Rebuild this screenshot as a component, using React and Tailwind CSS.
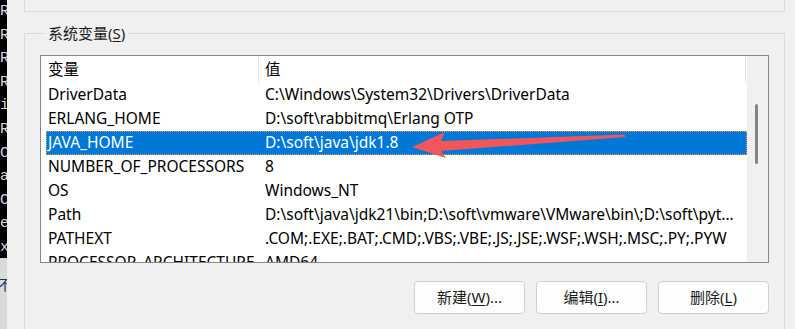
const rows = [
  ['DriverData', 'C:\\Windows\\System32\\Drivers\\DriverData'],
  ['ERLANG_HOME', 'D:\\soft\\rabbitmq\\Erlang OTP'],
  ['JAVA_HOME', 'D:\\soft\\java\\jdk1.8'],
  ['NUMBER_OF_PROCESSORS', '8'],
  ['OS', 'Windows_NT'],
  ['Path', 'D:\\soft\\java\\jdk21\\bin;D:\\soft\\vmware\\VMware\\bin\\;D:\\soft\\pyt...'],
  ['PATHEXT', '.COM;.EXE;.BAT;.CMD;.VBS;.VBE;.JS;.JSE;.WSF;.WSH;.MSC;.PY;.PYW'],
  ['PROCESSOR_ARCHITECTURE', 'AMD64'],
];

const termChars = ['R', 'R', 'R', 'R', 'i', 'R', 'C', 'a', 'C', 'e', 'x'];

const uiFont = "font-['Noto_Sans','Noto_Sans_CJK_SC',sans-serif]";

function Button({ label, hotkey, suffix = '' }) {
  return (
    <button className="w-[111px] h-[33px] bg-[#fdfdfd] border border-[#d0d0d0] rounded-[4px] text-[15px] text-[#1b1b1b] flex items-center justify-center">
      {label}(<span className="underline underline-offset-2">{hotkey}</span>){suffix}
    </button>
  );
}

export default function App() {
  return (
    <div className={`relative w-[795px] h-[329px] bg-[#f0f0f0] flex overflow-hidden ${uiFont}`}>
      {/* terminal window edge on the left */}
      <div className="w-[7px] shrink-0 flex flex-col">
        <div className="h-[258px] shrink-0 bg-black overflow-hidden">
          <div className="font-['Liberation_Mono',monospace] text-[15px] leading-[23.6px] text-[#d8d8d8] whitespace-nowrap">
            {termChars.map((c, i) => (
              <div key={i}>{c}</div>
            ))}
          </div>
        </div>
        <div className="flex-1 bg-[#dadada] overflow-hidden">
          <div className="mt-[16px] -ml-[2px] text-[14px] text-[#1d3557] font-['Noto_Sans_CJK_SC',sans-serif]">不</div>
        </div>
      </div>

      <div className="ml-[17px] w-[761px] flex flex-col">
        {/* bottom of the user variables group */}
        <div className="h-[12px] shrink-0 border-x border-b border-[#dcdcdc]" />

        <fieldset className="mt-[11px] shrink-0 border border-[#dcdcdc] px-[15px] pb-[20px] min-w-0">
          <legend className="ml-[5px] px-[3px] text-[15px] leading-[20px] text-[#1b1b1b]">
            系统变量(<span className="underline underline-offset-2">S</span>)
          </legend>

          <div className="mt-[12px] h-[208px] border border-[#828790] bg-white flex">
            <div className="w-[706px] overflow-hidden text-[15.5px] text-black">
              <div className="h-[27px] flex items-stretch">
                <div className="ml-[5px] w-[212px] pl-[2px] flex items-center">变量</div>
                <div className="flex-1 mr-[1px] border-x border-[#e5e5e5] pl-[6px] flex items-center">值</div>
              </div>
              {rows.map(([name, value]) => {
                const selected = name === 'JAVA_HOME';
                return (
                  <div
                    key={name}
                    className={`ml-[5px] h-[24px] flex items-center whitespace-nowrap ${
                      selected ? 'bg-[#0078d7] text-white border border-dotted border-[#f0a040]' : 'border border-transparent'
                    }`}
                  >
                    <div className="w-[212px] pl-[1px] overflow-hidden">{name}</div>
                    <div className="pl-[6px]">{value}</div>
                  </div>
                );
              })}
            </div>
            <div className="w-[21px] bg-[#f0f0f0] pl-[8px] pt-[48px]">
              <div className="w-[3px] h-[60px] bg-[#858585] rounded-full" />
            </div>
          </div>

          <div className="mt-[18px] flex justify-end gap-[11px]">
            <Button label="新建" hotkey="W" suffix="..." />
            <Button label="编辑" hotkey="I" suffix="..." />
            <Button label="删除" hotkey="L" />
          </div>
        </fieldset>
      </div>

      {/* red annotation arrow */}
      <svg className="absolute left-0 top-0 pointer-events-none" width="795" height="329">
        <polygon
          points="412,147 445,132 441,141 625,134.5 625,137 441,151 446,158"
          fill="#f2555a"
        />
      </svg>
    </div>
  );
}
